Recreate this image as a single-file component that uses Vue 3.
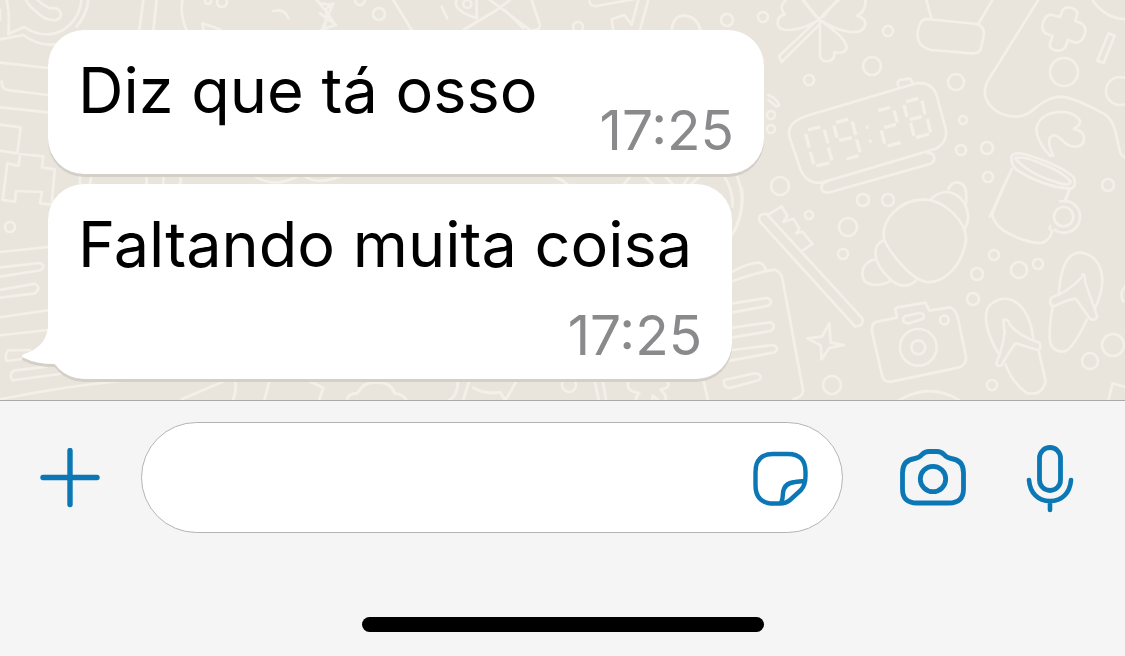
<script setup>
import { ref } from 'vue'

const draft = ref('')
const messages = [
  { id: 1, text: 'Diz que tá osso', time: '17:25', stacked: false, tail: false },
  { id: 2, text: 'Faltando muita coisa', time: '17:25', stacked: true, tail: true },
]

// Small circles scattered over the wallpaper: [x, y, radius]
const dots = [
  [763, 17, 5], [888, 31, 5], [872, 66, 9], [809, 80, 5], [956, 82, 8],
  [963, 120, 4], [961, 150, 5], [987, 148, 6], [988, 177, 5], [1108, 185, 6],
  [780, 186, 9], [863, 200, 6], [888, 200, 6], [1064, 72, 14], [1120, 91, 14],
  [771, 115, 4], [771, 129, 4], [809, 215, 4], [848, 227, 9], [843, 254, 5],
  [994, 255, 5], [977, 274, 6], [1019, 270, 8], [1038, 264, 5], [973, 299, 6],
  [832, 385, 9], [992, 385, 5], [1090, 361, 8], [1113, 345, 11],
  [10, 227, 5], [222, 2, 5], [208, 1, 3], [379, 14, 6], [360, 0, 5],
  [727, 20, 6], [578, 27, 5], [569, 385, 7],
]
</script>

<template>
  <div class="screen">
    <main class="chat">
      <svg class="wallpaper" viewBox="0 0 1125 400" preserveAspectRatio="xMinYMin slice" aria-hidden="true">
        <circle v-for="(d, i) in dots" :key="i" :cx="d[0]" :cy="d[1]" :r="d[2]" stroke-width="2.6" />

        <!-- clover, jar, gamepad, alarm clock, mug -->
        <g transform="translate(760 0) scale(.3333)">
          <path d="M178 58C150 30 135 0 120 -10M178 58C200 30 225 10 242 -5M178 58C130 90 55 105 53 70Q52 48 74 43Q54 20 78 0M178 58C225 90 300 115 315 78Q320 55 292 47Q322 30 315 -5M180 60V168Q185 187 205 183Q225 180 223 157Q260 163 260 140C250 105 215 90 180 60M168 64L57 168L65 186L178 74M168 50L122 -8M190 50L236 -6" />
          <path d="M498 -5L514 55M700 -5L655 72M500 57L650 72Q676 80 671 108L662 148Q656 162 635 160L515 150Q470 140 473 100Q478 58 500 57Z" />
          <path d="M838 -5L682 245C655 305 710 350 770 350C820 350 840 290 905 290C950 295 1000 325 1035 343C1075 370 1070 445 1085 465L1100 475M995 -5Q1030 55 1100 58" />
          <path d="M908 30Q918 18 936 24Q953 30 952 43L946 62L964 70Q982 82 974 104Q966 128 946 128L924 120L915 143Q902 157 883 150Q866 143 870 130L878 108L856 100Q842 88 850 66Q858 44 874 44L900 51Z" />
          <path d="M1046 100L1064 107L1031 189L1012 182Z" />
          <path d="M148 345L470 250Q515 245 530 285L558 390Q562 430 525 447L185 548Q140 552 122 510L88 410Q78 365 148 345ZM416 261L413 250Q412 243 420 240L445 236Q455 237 457 251M200 545Q180 550 186 570Q192 581 210 577L510 492Q525 485 523 472Q519 457 503 460" />
          <g>
            <path d="M144 390L181 381M137 402L148 443M193 389L204 430M151 456L162 493M205 443L216 482M169 498L208 489M228 367L265 358M222 377L231 413M277 365L287 405M237 421L275 413M290 418L300 457M260 477L296 467M355 332L391 322M402 331L412 367M372 383L408 373M364 391L374 431M383 438L422 428M439 305L475 295M432 315L441 351M486 303L495 343M449 359L485 350M452 369L462 408M502 357L512 397M468 413L507 402M317 382L325 381M327 425L335 423" />
          </g>
          <path d="M870 467C835 430 825 395 832 375C850 330 925 325 955 355Q970 370 942 387Q975 393 972 420Q968 442 940 440C905 435 905 405 880 406Q855 415 880 467Z" />
          <path d="M755 468Q765 455 800 464Q900 495 940 530Q955 565 925 566Q850 560 770 510Q750 490 755 468ZM765 475Q785 467 830 485Q910 515 932 545Q930 560 895 548Q810 525 765 475M755 508L690 650M930 568L915 605" />
        </g>

        <!-- toothbrush, teddy, mug body, camera, sandals, sheet, star -->
        <g transform="translate(720 190) scale(.3333)">
          <path d="M120 95Q110 70 140 72L427 385Q432 410 405 409ZM146 74L184 49L202 77L190 96L220 86L238 116L229 130L247 125L278 162L248 181" />
          <path d="M493 150C480 90 540 30 610 28C680 30 740 100 738 150C730 215 680 280 620 276C575 270 510 190 493 150ZM493 150C455 165 465 205 480 232C520 290 555 300 588 272M470 207C425 215 420 250 435 275Q465 295 508 275M632 28C680 -20 740 20 744 75Q746 95 734 118M685 -3Q700 -30 722 -20Q743 -15 738 42" />
          <path d="M850 -10L817 72Q818 95 848 120C890 145 930 160 965 159Q988 152 997 124Q985 115 991 108M1048 -5L1036 28M1020 34A48 48 0 1 1 1005 120" />
          <circle cx="1031" cy="80" r="29" />
          <path d="M35 135C60 100 73 40 65 -5M38 245Q80 220 120 218Q134 225 137 240M38 273Q120 245 165 239Q182 245 187 265L249 600Q250 620 220 628M38 340L140 324Q162 330 147 347L38 367M38 413L150 397Q172 406 152 423L38 442M38 480L160 465Q180 475 164 487L30 512M12 570L105 550Q130 555 118 570L30 594Q8 595 12 570Z" />
          <path d="M328 400L332 458L372 465L328 474L305 508L302 466L262 445L306 440Z" />
          <path d="M457 410Q460 395 475 394L531 383L526 358Q530 350 545 350L617 338L628 362L690 352Q710 360 715 390L738 500Q740 525 715 533L515 575Q493 577 487 560L456 425ZM555 378L600 369Q617 370 610 386L567 400Q548 400 549 387Z" />
          <circle cx="595" cy="472" r="55" /><circle cx="595" cy="472" r="21" /><circle cx="673" cy="390" r="13" />
          <path d="M835 490C800 430 780 360 820 337C860 310 925 330 940 445M850 390Q865 385 870 405Q900 440 958 458Q965 475 955 481L887 460Q870 480 845 526Q830 532 829 520Q850 470 854 425ZM857 524Q875 575 920 609Q965 620 977 575L956 482" />
          <path d="M1016 315C1020 250 1035 190 1080 187C1140 195 1170 260 1125 355M1088 253Q1096 250 1095 275L1132 380Q1122 395 1110 386L1068 327Q1050 325 1000 350Q985 340 994 323Q1045 305 1085 262ZM998 350Q985 420 991 460Q1005 490 1035 484Q1060 475 1100 390" />
          <path d="M1220 285Q1195 310 1210 335M535 632Q630 575 720 632M1165 632L1178 580L1220 592" />
        </g>

        <!-- bubble logo, books, plus sign, notes -->
        <g transform="scale(.3333)">
          <path d="M20 0Q30 40 25 102L73 81Q130 120 190 90Q240 55 244 0M0 118L70 105Q130 150 200 125M265 0Q262 40 230 80M78 0Q90 25 135 55Q175 70 183 45Q180 20 150 25Q120 10 108 -5M0 30V60" />
          <path d="M0 188L145 204M5 245Q5 270 30 271L145 285M0 322L145 337M0 374L62 382L52 460L0 452M22 490L55 498L61 462L130 469L126 502L164 508L155 614L120 610L126 576L48 573L45 605L8 600ZM0 756L145 741M0 802L120 789Q139 798 122 811L0 830M0 870L105 851Q125 862 105 880L0 893M0 952L145 931M0 1006L145 990" />
          <path d="M90 1050L25 1051Q12 1065 20 1083L85 1075M140 1100L40 1112Q25 1125 38 1141L180 1122M0 1198Q210 1155 420 1138M545 1198L690 1136M703 1136Q713 1160 700 1198M810 1136L794 1198" />
          <path d="M430 0L418 90M470 0L460 90M547 0Q540 50 560 90M610 88L607 70L660 88M820 33Q855 25 865 55M950 0L975 30L1000 10M980 35Q980 70 970 88L1005 75ZM240 525V550M275 525L270 550M440 525V550M490 525V550M540 525Q545 540 540 550M760 525Q820 570 900 525M910 525Q950 560 1030 525" />
        </g>
        <g transform="translate(320 0) scale(.3333)">
          <path d="M0 10L38 15L5 90M0 40L48 75M220 0L275 90M365 20L382 55M410 0Q395 30 470 55V0M430 90L530 30L570 0M510 0L630 90M555 30L610 85M635 0L660 75Q660 90 640 90M808 0Q808 20 830 18L955 -5M880 90L875 58L913 45L935 75L955 0M960 90L985 0M1055 90Q1060 45 1095 47Q1130 50 1142 90" />
          <circle cx="442" cy="12" r="12" />
        </g>
        <g transform="translate(200 370) scale(.3571)">
          <path d="M295 25L345 50L332 90M412 90Q410 65 440 65Q460 30 500 35Q535 35 545 65Q575 70 580 90M685 90Q725 80 722 25M735 90L755 28M765 50Q800 70 840 62L855 85L890 25M1105 30L1118 90M1128 30L1138 90M1200 30Q1190 60 1230 65Q1215 80 1225 90M1265 90L1268 72L1290 90Q1320 85 1290 55Q1320 50 1308 30M1410 30L1424 90" />
        </g>
        <g transform="translate(540 90) scale(.3333)">
          <path d="M685 15Q710 25 718 45L710 50L685 30M20 254Q55 260 85 285M250 285L275 254M310 254L340 285M370 254L400 285M450 254L430 285M485 254L450 285M550 254Q580 300 578 350M590 254Q625 340 580 430" />
        </g>
      </svg>

      <article
        v-for="m in messages"
        :key="m.id"
        class="bubble"
        :class="{ stacked: m.stacked }"
      >
        <svg v-if="m.tail" class="tail" viewBox="0 0 64 60" aria-hidden="true">
          <path d="M26 0V4C26 20 17 29 2 34Q-2 36 2 38Q14 44 32 44L64 59V0Z" />
        </svg>
        <p class="text">{{ m.text }}</p>
        <time class="time">{{ m.time }}</time>
      </article>
    </main>

    <footer class="composer">
      <form class="bar" @submit.prevent>
        <button class="icon-button" type="button" aria-label="Anexar">
          <svg width="60" height="60" viewBox="0 0 60 60"><path d="M30 2.500V56.500M3 29.500H57" stroke-width="5.4" /></svg>
        </button>
        <div class="field">
          <input v-model="draft" type="text" aria-label="Mensagem" />
          <button class="icon-button" type="button" aria-label="Figurinhas">
            <svg width="56" height="56" viewBox="0 0 56 56">
              <path d="M53.500 26V22Q53.500 4 36 4H21Q3.500 4 3.500 22V35Q3.500 53.500 22 53.500H28Q34 53.500 38 50L49 40Q53.500 35 53.500 26ZM52 31Q47 31.500 43 32Q32 33 31 43Q31 49 29 53" stroke-width="4.4" />
            </svg>
          </button>
        </div>
        <button class="icon-button" type="button" aria-label="Câmera">
          <svg width="66" height="60" viewBox="0 0 66 60">
            <path d="M15 10.500Q19 10 22 6.500Q25 3.500 29 3.500H37Q41 3.500 44 6.500Q47 10 51 10.500Q63.500 12 63.500 25V41Q63.500 55 49 55H17Q2.500 55 2.500 41V25Q2.500 12 15 10.500Z" stroke-width="4.8" />
            <circle cx="33" cy="31" r="12.700" stroke-width="4.8" />
          </svg>
        </button>
        <button class="icon-button mic" type="button" aria-label="Gravar áudio">
          <svg width="48" height="70" viewBox="0 0 48 70">
            <rect x="13.500" y="4.500" width="21" height="43" rx="10.500" stroke-width="4.8" />
            <path d="M3 37C4 50 12 58 24 58S44 50 45 37M24 58V67" stroke-width="4.6" />
          </svg>
        </button>
      </form>
      <div class="home-indicator"></div>
    </footer>
  </div>
</template>

<style>
body {
  margin: 0;
}
</style>

<style scoped>
.screen {
  min-height: 100vh;
  display: flex;
  flex-direction: column;
  background: #f5f5f5;
  font-family: Inter, "Liberation Sans", sans-serif;
}

.chat {
  position: relative;
  flex: 1;
  display: flex;
  flex-direction: column;
  align-items: flex-start;
  justify-content: flex-end;
  gap: 10px;
  padding: 30px 48px 21px;
  background: #e9e5dd;
  overflow: hidden;
}

.wallpaper {
  position: absolute;
  inset: 0;
  width: 100%;
  height: 100%;
  fill: none;
  stroke: #f3f0ea;
  stroke-linecap: round;
  stroke-linejoin: round;
}

.wallpaper g {
  stroke-width: 8px;
}

.wallpaper g g {
  stroke-width: 10px;
  stroke-linecap: butt;
}

.bubble {
  position: relative;
  box-sizing: border-box;
  display: flex;
  align-items: flex-start;
  gap: 62px;
  min-height: 144px;
  padding: 20px 30px 16px;
  border-radius: 36px;
  background: #fff;
  filter: drop-shadow(0 3px 0 #d4d0c9);
}

.bubble.stacked {
  flex-direction: column;
  gap: 23px;
  padding-right: 40px;
}

.tail {
  position: absolute;
  left: -26px;
  bottom: -1px;
  width: 64px;
  height: 60px;
  fill: #fff;
}

.text {
  position: relative;
  margin: 0;
  color: #000;
  font-size: 63px;
  line-height: 80px;
  white-space: nowrap;
}

.time {
  align-self: flex-end;
  color: #8a8a8d;
  font-size: 55px;
  line-height: 56px;
}

.stacked .time {
  margin-right: -10px;
}

.composer {
  border-top: 1px solid #a9a9a9;
  background: #f5f5f5;
  padding: 21px 0 24px;
}

.bar {
  display: flex;
  align-items: center;
  padding: 0 51px 0 40px;
}

.field {
  flex: 1;
  min-width: 0;
  box-sizing: border-box;
  height: 111px;
  margin: 0 57px 0 41px;
  padding: 0 34px 0 48px;
  display: flex;
  align-items: center;
  gap: 24px;
  border: 1px solid #b4b4b4;
  border-radius: 56px;
  background: #fff;
}

.field input {
  flex: 1;
  min-width: 0;
  border: 0;
  outline: 0;
  padding: 0;
  background: transparent;
  font: inherit;
  font-size: 53px;
}

.icon-button {
  display: flex;
  padding: 0;
  border: 0;
  background: transparent;
  cursor: pointer;
}

.icon-button svg {
  fill: none;
  stroke: #0b78b5;
  stroke-linecap: round;
  stroke-linejoin: round;
}

.mic {
  margin-left: 60px;
}

.home-indicator {
  width: 402px;
  height: 15px;
  margin: 84px auto 0;
  border-radius: 8px;
  background: #000;
}
</style>
